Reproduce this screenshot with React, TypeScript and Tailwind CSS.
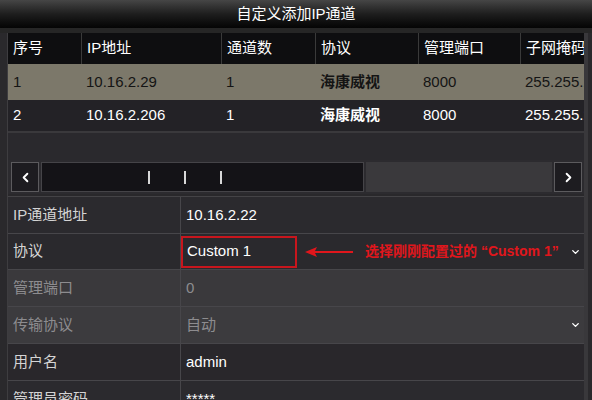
import { ChevronLeft, ChevronRight, ChevronDown } from "lucide-react";

const font = { fontFamily: '"Liberation Sans", "Noto Sans CJK SC", sans-serif' };

const cols = ["w-[73px]", "w-[140px]", "w-[94px]", "w-[103px]", "w-[102px]", "w-[80px]"];

type Row = { no: string; ip: string; ch: string; proto: string; port: string; mask: string };

const rows: Row[] = [
	{ no: "1", ip: "10.16.2.29", ch: "1", proto: "海康威视", port: "8000", mask: "255.255.255.0" },
	{ no: "2", ip: "10.16.2.206", ch: "1", proto: "海康威视", port: "8000", mask: "255.255.255.0" },
];

function Cell({ w, children, className = "" }: { w: string; children: React.ReactNode; className?: string }) {
	return <div className={`${w} shrink-0 flex items-center pl-[5px] whitespace-nowrap overflow-hidden ${className}`}>{children}</div>;
}

type FormRow = { label: string; value: string; bg: string; dim?: boolean; box?: boolean; select?: boolean; h: string };

const form: FormRow[] = [
	{ label: "IP通道地址", value: "10.16.2.22", bg: "bg-[#2b2a2e]", h: "h-[37px]" },
	{ label: "协议", value: "Custom 1", bg: "bg-[#2a292d]", box: true, select: true, h: "h-[36px]" },
	{ label: "管理端口", value: "0", bg: "bg-[#3a393c]", dim: true, h: "h-[37px]" },
	{ label: "传输协议", value: "自动", bg: "bg-[#3c3b3e]", dim: true, select: true, h: "h-[37px]" },
	{ label: "用户名", value: "admin", bg: "bg-[#29272b]", h: "h-[37px]" },
	{ label: "管理员密码", value: "*****", bg: "bg-[#2b2a2e]", h: "h-[37px]" },
];

export default function App() {
	return (
		<div className="w-[592px] h-[400px] overflow-hidden bg-[#2a292c] text-[15px]" style={font}>
			<div className="h-[28px] flex items-center justify-center bg-gradient-to-b from-[#464646] via-[#1e1e1e] to-[#050505] text-white text-[15px]">
				自定义添加IP通道
			</div>
			<div className="h-[5px] bg-[#262626]" />
			<div className="ml-[7px] mr-[4px] border-l border-r-[4px] border-[#3e3d40] border-r-[#39383b]">
				{/* table */}
				<div className="flex h-[31px] bg-[#0e0e10] text-white overflow-hidden">
					{["序号", "IP地址", "通道数", "协议", "管理端口", "子网掩码"].map((h, i) => (
						<Cell key={h} w={cols[i]} className={i > 0 ? "border-l border-[#3a3a3a]" : ""}>
							{h}
						</Cell>
					))}
				</div>
				{rows.map((r, idx) => (
					<div
						key={r.no}
						className={`flex overflow-hidden ${idx === 0 ? "h-[36px] bg-[#7c786a] text-[#141414]" : "h-[31px] bg-[#232226] text-white"}`}
					>
						<Cell w={cols[0]}>{r.no}</Cell>
						<Cell w={cols[1]}>{r.ip}</Cell>
						<Cell w={cols[2]}>{r.ch}</Cell>
						<Cell w={cols[3]} className="font-bold">{r.proto}</Cell>
						<Cell w={cols[4]}>{r.port}</Cell>
						<Cell w={cols[5]}>{r.mask}</Cell>
					</div>
				))}
				<div className="h-[2px] bg-[#3a393c]" />
				<div className="h-[27px] bg-[#2a292d]" />
				{/* horizontal scroller */}
				<div className="h-[34px] flex items-center gap-[2px] pl-[3px] pr-[2px] bg-[#2c2b2f]">
					<div className="w-[28px] h-[30px] flex items-center justify-center bg-[#1d1c20] border border-[#5c5b5e] text-white">
						<ChevronLeft size={15} strokeWidth={3} />
					</div>
					<div className="w-[323px] h-[30px] bg-[#141317] border border-[#454448] flex items-center">
						<div className="ml-[106px] w-[2px] h-[13px] bg-[#d8d8d8]" />
						<div className="ml-[34px] w-[2px] h-[13px] bg-[#d8d8d8]" />
						<div className="ml-[34px] w-[2px] h-[13px] bg-[#d8d8d8]" />
					</div>
					<div className="flex-1 h-[30px] bg-[#3a393c]" />
					<div className="w-[28px] h-[30px] flex items-center justify-center bg-[#1d1c20] border border-[#5c5b5e] text-white">
						<ChevronRight size={15} strokeWidth={3} />
					</div>
				</div>
				<div className="h-[3px] bg-[#29282b] border-b border-[#444346]" />
				{/* form */}
				{form.map((f) => (
					<div key={f.label} className={`flex ${f.h} ${f.bg} border-b border-[#47464a]`}>
						<div className={`w-[173px] shrink-0 flex items-center pl-[5px] border-r border-[#47464a] ${f.dim ? "text-[#8d8c8f]" : "text-[#d4d4d4]"}`}>
							{f.label}
						</div>
						<div className="flex-1 flex items-center relative overflow-hidden">
							{f.box ? (
								<div className="shrink-0 w-[116px] h-[32px] border-2 border-[#c8161d] flex items-center pl-[4px] text-white">
									{f.value}
								</div>
							) : (
								<div className={`pl-[5px] ${f.dim ? "text-[#8d8c8f]" : "text-white"}`}>{f.value}</div>
							)}
							{f.box && (
								<div className="flex items-center ml-[8px] gap-[10px]">
									<svg width="50" height="12" viewBox="0 0 50 12" className="shrink-0">
										<path d="M0 6 L12 1 L10 5 L48 5 L48 7 L10 7 L12 11 Z" fill="#e0161c" />
									</svg>
									<span className="text-[#e0161c] font-bold text-[14px] whitespace-nowrap">选择刚刚配置过的 “Custom 1”</span>
								</div>
							)}
							{f.select && (
								<ChevronDown size={11} strokeWidth={3} className="absolute right-[3px] top-1/2 -translate-y-1/2 text-white" />
							)}
						</div>
					</div>
				))}
			</div>
		</div>
	);
}
